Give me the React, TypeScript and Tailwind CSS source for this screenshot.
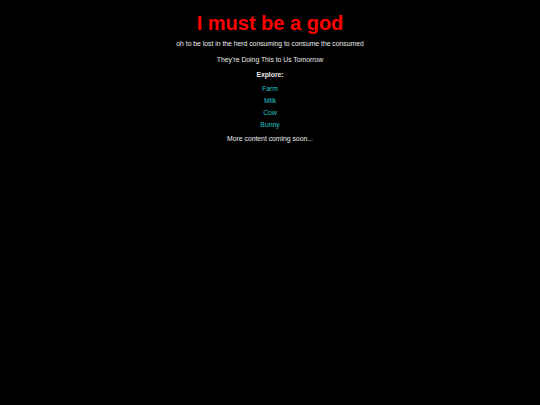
import React from 'react';

const links = ['Farm', 'Milk', 'Cow', 'Bunny'];

export default function App() {
    return (
        <div
            className="flex flex-col items-center min-h-[405px] w-full bg-black text-[#ececec] text-[6.8px] leading-[8px]"
            style={{ fontFamily: '"Liberation Sans", Arial, sans-serif' }}
        >
            <h1 className="mt-[11px] font-bold text-[#ff0000] text-[20px] leading-[24px]">I must be a god</h1>
            <p className="mt-[5px]">oh to be lost in the herd consuming to consume the consumed</p>
            <p className="mt-[8px]">They&rsquo;re Doing This to Us Tomorrow</p>
            <p className="mt-[7px] font-bold">Explore:</p>

            {/* nav links */}
            <ul className="flex flex-col items-center gap-[4px] mt-[6px]">
                {links.map((link) => (
                    <li key={link}>
                        <a href="#" className="text-[#22c7c9]">{link}</a>
                    </li>
                ))}
            </ul>

            <p className="mt-[6px]">More content coming soon...</p>
        </div>
    );
}
